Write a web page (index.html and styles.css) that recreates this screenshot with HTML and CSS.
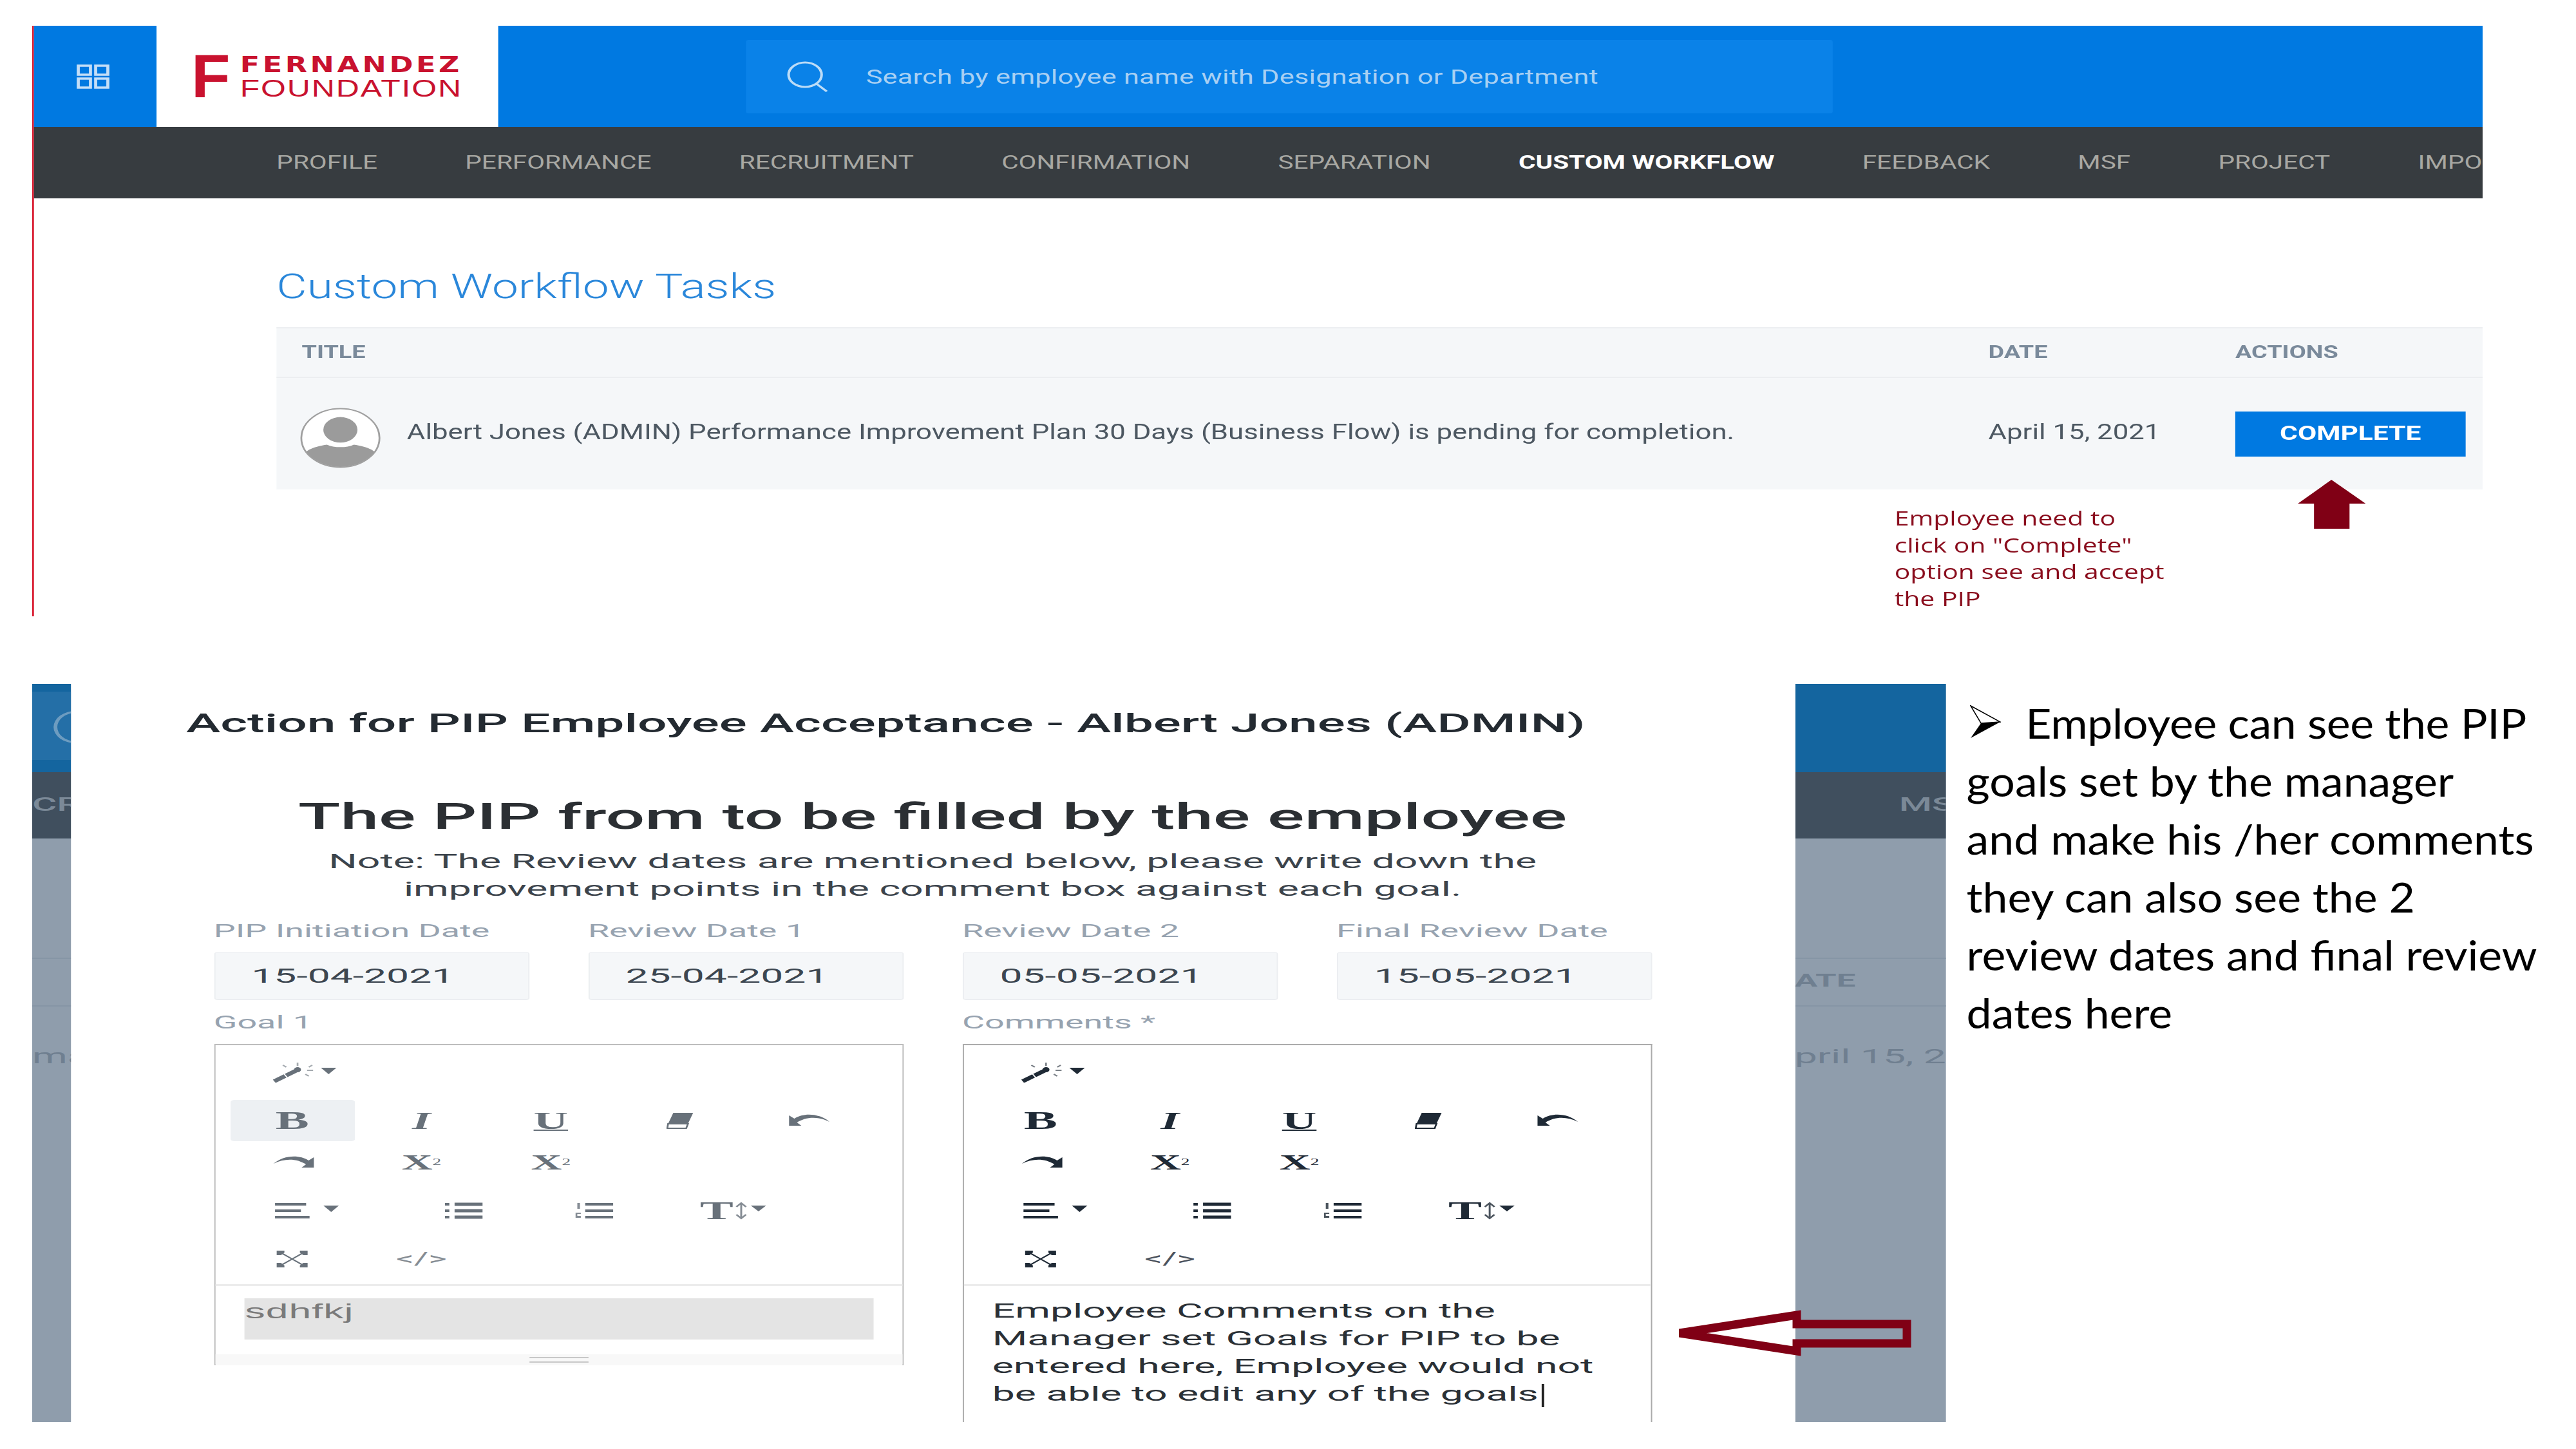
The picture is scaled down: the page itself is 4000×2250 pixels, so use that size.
FILE: index.html
```html
<!DOCTYPE html>
<html lang="en">
<head>
    <meta charset="UTF-8">
    <title>Custom Workflow Tasks</title>
    <link rel="stylesheet" href="styles.css">
</head>
<body>
    <!-- icon sheet -->
    <svg class="icon-sheet" aria-hidden="true">
        <symbol id="i-wand" viewBox="0 0 80 32" preserveAspectRatio="none">
            <path d="M4 30 L30 13" stroke="currentColor" stroke-width="6" stroke-dasharray="15 1.5" fill="none"/>
            <circle cx="31" cy="12" r="4" fill="currentColor"/>
            <path d="M31 1v5M14 5l4 3M48 5l-4 3M42 13h7M44 22l-4-3" stroke="currentColor" stroke-width="2" opacity=".6" fill="none"/>
            <path d="M58 9h18l-9 10z" fill="currentColor"/>
        </symbol>
        <symbol id="i-eraser" viewBox="0 0 32 28" preserveAspectRatio="none">
            <path d="M8 2h23l-6 17H2z" fill="currentColor"/>
            <path d="M2 19h23l-2 7H1z" fill="none" stroke="currentColor" stroke-width="2"/>
        </symbol>
        <symbol id="i-undo" viewBox="0 0 50 22" preserveAspectRatio="none">
            <path d="M1 3v16h14L10 14C20 5 34 4 47 13 36 0 18-2 7 8z" fill="currentColor"/>
        </symbol>
        <symbol id="i-redo" viewBox="0 0 50 22" preserveAspectRatio="none">
            <path d="M49 3v16H35l5-5C30 5 16 4 3 13 14 0 32-2 43 8z" fill="currentColor"/>
        </symbol>
        <symbol id="i-align" viewBox="0 0 80 26" preserveAspectRatio="none">
            <path d="M2 3h36M2 13h30M2 23h40" stroke="currentColor" stroke-width="4" fill="none"/>
            <path d="M58 5h18l-9 10z" fill="currentColor"/>
        </symbol>
        <symbol id="i-ul" viewBox="0 0 46 26" preserveAspectRatio="none">
            <path d="M12 3h32M12 13h32M12 23h32" stroke="currentColor" stroke-width="5" fill="none"/>
            <path d="M1 1h5v4H1zM1 11h5v4H1zM1 21h5v4H1z" fill="currentColor"/>
        </symbol>
        <symbol id="i-ol" viewBox="0 0 46 26" preserveAspectRatio="none">
            <path d="M12 3h32M12 13h32M12 23h32" stroke="currentColor" stroke-width="4" fill="none"/>
            <path d="M3 1h3v9H3zM1 16h6v2H3v3h4v3H1z" fill="currentColor" opacity=".8"/>
        </symbol>
        <symbol id="i-size" viewBox="0 0 34 28" preserveAspectRatio="none">
            <path d="M6 2v24M1 8l5-6 5 6M1 20l5 6 5-6" stroke="currentColor" stroke-width="2" fill="none" opacity=".8"/>
            <path d="M16 6h16l-8 9z" fill="currentColor"/>
        </symbol>
        <symbol id="i-full" viewBox="0 0 38 28" preserveAspectRatio="none">
            <path d="M7 5l24 18M31 5L7 23" stroke="currentColor" stroke-width="2" fill="none"/>
            <path d="M1 1h9v3l-4 4H1zM37 1h-9v3l4 4h5zM1 27h9v-3l-4-4H1zM37 27h-9v-3l4-4h5z" fill="currentColor"/>
        </symbol>
    </svg>

    <section class="shot-top">
        <div class="stretch">
            <header class="topbar">
                <div class="apps-tile">
                    <svg class="apps-icon" viewBox="0 0 38 38">
                        <path d="M2 2h14v14H2zM22 2h14v14H22zM2 22h14v14H2zM22 22h14v14H22z"/>
                    </svg>
                </div>
                <div class="logo">
                    <span class="logo-mark">F</span>
                    <span class="logo-words">
                        <span class="logo-top">FERNANDEZ</span>
                        <span class="logo-bottom">FOUNDATION</span>
                    </span>
                </div>
                <div class="search">
                    <svg class="search-icon" viewBox="0 0 49 48">
                        <circle cx="22" cy="21" r="19"/>
                        <path d="M35 35l12 12"/>
                    </svg>
                    <span class="search-text">Search by employee name with Designation or Department</span>
                </div>
            </header>
            <nav class="menu">
                <span>PROFILE</span>
                <span>PERFORMANCE</span>
                <span>RECRUITMENT</span>
                <span>CONFIRMATION</span>
                <span>SEPARATION</span>
                <span class="active">CUSTOM WORKFLOW</span>
                <span>FEEDBACK</span>
                <span>MSF</span>
                <span>PROJECT</span>
                <span>IMPO</span>
            </nav>
            <main class="tasks">
                <h1>Custom Workflow Tasks</h1>
                <div class="task-table">
                    <div class="task-head">
                        <span>TITLE</span>
                        <span>DATE</span>
                        <span>ACTIONS</span>
                    </div>
                    <div class="task-row">
                        <span class="task-title">
                            <svg class="avatar" viewBox="0 0 90 90" preserveAspectRatio="none">
                                <defs><clipPath id="avatar-clip"><circle cx="45" cy="45" r="43"/></clipPath></defs>
                                <circle cx="45" cy="45" r="43.5" fill="#fff" stroke="#a0a0a0" stroke-width="2"/>
                                <circle cx="45" cy="33" r="19" fill="#9b9b9b"/>
                                <path d="M4 90V70c4-10 20-14 26-15 8 5 22 5 30 0 6 1 22 5 26 15v20z" fill="#9b9b9b" clip-path="url(#avatar-clip)"/>
                            </svg>
                            Albert Jones (ADMIN) Performance Improvement Plan 30 Days (Business Flow) is pending for completion.
                        </span>
                        <span class="task-date">April 15, 2021</span>
                        <span class="complete-btn">COMPLETE</span>
                    </div>
                </div>
            </main>
            <svg class="up-arrow" viewBox="0 0 105 76" preserveAspectRatio="none">
                <path d="M52 0L105 37H80V76H25V37H0z"/>
            </svg>
            <p class="hint">Employee need to<br>click on "Complete"<br>option see and accept<br>the PIP</p>
        </div>
    </section>

    <section class="shot-bottom">
        <div class="stage">
            <div class="stage-row">
                <div class="strip strip-left">
                    <div class="strip-blue"><div class="strip-search"><i class="strip-ring"></i></div></div>
                    <div class="strip-dark"><span>CR</span></div>
                    <div class="strip-gray"></div>
                    <div class="strip-line"></div>
                    <div class="strip-line strip-cell"><span>ma</span></div>
                </div>
                <div class="modal">
                    <h2 class="modal-title">Action for PIP Employee Acceptance - Albert Jones (ADMIN)</h2>
                    <div class="modal-form">
                        <h3 class="form-heading">The PIP from to be filled by the employee</h3>
                        <p class="form-note">Note: The Review dates are mentioned below, please write down the<br>improvement points in the comment box against each goal.</p>
                        <div class="date-fields">
                            <div><label>PIP Initiation Date</label><div class="date-box">15-04-2021</div></div>
                            <div><label>Review Date 1</label><div class="date-box">25-04-2021</div></div>
                            <div><label>Review Date 2</label><div class="date-box">05-05-2021</div></div>
                            <div><label>Final Review Date</label><div class="date-box">15-05-2021</div></div>
                        </div>
                        <div class="goal-fields">
                            <div>
                                <label>Goal 1</label>
                                <div class="editor editor-off">
                                    <div class="toolbar">
                                        <div class="tool-row"><span class="tool"><svg class="ic-wand"><use href="#i-wand"/></svg></span></div>
                                        <div class="tool-row">
                                            <span class="tool tool-on glyph-b">B</span><span class="tool glyph-i">I</span><span class="tool glyph-u">U</span>
                                            <span class="tool"><svg class="ic-eraser"><use href="#i-eraser"/></svg></span>
                                            <span class="tool"><svg class="ic-arc"><use href="#i-undo"/></svg></span>
                                        </div>
                                        <div class="tool-row tool-row-tight">
                                            <span class="tool"><svg class="ic-arc"><use href="#i-redo"/></svg></span>
                                            <span class="tool glyph-x">X<sup>2</sup></span><span class="tool glyph-x">X<sub>2</sub></span>
                                        </div>
                                        <div class="tool-row tool-row-para">
                                            <span class="tool"><svg class="ic-align"><use href="#i-align"/></svg></span>
                                            <span class="tool"><svg class="ic-list"><use href="#i-ul"/></svg></span>
                                            <span class="tool"><svg class="ic-list"><use href="#i-ol"/></svg></span>
                                            <span class="tool glyph-t">T<svg class="ic-size"><use href="#i-size"/></svg></span>
                                        </div>
                                        <div class="tool-row">
                                            <span class="tool"><svg class="ic-full"><use href="#i-full"/></svg></span>
                                            <span class="tool glyph-code">&lt;/&gt;</span>
                                        </div>
                                    </div>
                                    <div class="editor-body-off"><div class="off-text">sdhfkj</div></div>
                                    <div class="grip"><i></i></div>
                                </div>
                            </div>
                            <div>
                                <label>Comments *</label>
                                <div class="editor editor-on">
                                    <div class="toolbar">
                                        <div class="tool-row"><span class="tool"><svg class="ic-wand"><use href="#i-wand"/></svg></span></div>
                                        <div class="tool-row">
                                            <span class="tool glyph-b">B</span><span class="tool glyph-i">I</span><span class="tool glyph-u">U</span>
                                            <span class="tool"><svg class="ic-eraser"><use href="#i-eraser"/></svg></span>
                                            <span class="tool"><svg class="ic-arc"><use href="#i-undo"/></svg></span>
                                        </div>
                                        <div class="tool-row tool-row-tight">
                                            <span class="tool"><svg class="ic-arc"><use href="#i-redo"/></svg></span>
                                            <span class="tool glyph-x">X<sup>2</sup></span><span class="tool glyph-x">X<sub>2</sub></span>
                                        </div>
                                        <div class="tool-row tool-row-para">
                                            <span class="tool"><svg class="ic-align"><use href="#i-align"/></svg></span>
                                            <span class="tool"><svg class="ic-list"><use href="#i-ul"/></svg></span>
                                            <span class="tool"><svg class="ic-list"><use href="#i-ol"/></svg></span>
                                            <span class="tool glyph-t">T<svg class="ic-size"><use href="#i-size"/></svg></span>
                                        </div>
                                        <div class="tool-row">
                                            <span class="tool"><svg class="ic-full"><use href="#i-full"/></svg></span>
                                            <span class="tool glyph-code">&lt;/&gt;</span>
                                        </div>
                                    </div>
                                    <div class="editor-body">Employee Comments on the<br>Manager set Goals for PIP to be<br>entered here, Employee would not<br>be able to edit any of the goals<i class="caret"></i></div>
                                </div>
                            </div>
                        </div>
                    </div>
                </div>
                <div class="strip strip-right">
                    <div class="strip-blue"></div>
                    <div class="strip-dark"><span>MS</span></div>
                    <div class="strip-gray"></div>
                    <div class="strip-line strip-th"><span>ATE</span></div>
                    <div class="strip-line strip-cell"><span>pril 15, 2</span></div>
                </div>
            </div>
            <svg class="left-arrow" viewBox="0 0 375 82" preserveAspectRatio="none">
                <path d="M8 40L190 12V26H361V56H190V68z"/>
            </svg>
        </div>
        <div class="side-text">
            <svg class="bullet" viewBox="0 0 48 52" preserveAspectRatio="none">
                <path d="M1 1L47 26 17 28z" fill="#fff" stroke="#000" stroke-width="1.5"/>
                <path d="M1 51L47 26 17 28z"/>
            </svg><span class="side-first">Employee can see the PIP</span><br>
            goals set by the manager<br>
            and make his /her comments<br>
            they can also see the 2<br>
            review dates and final review<br>
            dates here
        </div>
    </section>
</body>
</html>
```

FILE: styles.css
```css
* {
    box-sizing: border-box;
}
html, body {
    margin: 0;
    background: #fff;
}
body {
    width: 4000px;
    height: 2250px;
    padding: 40px 0 0 50px;
    overflow: hidden;
    font-family: Roboto, "Liberation Sans", sans-serif;
    color: #333a41;
}
.icon-sheet {
    display: none;
}

/* the screenshots in the slide are pulled wider than they were taken */
.stretch {
    transform: scaleX(1.35);
    transform-origin: left top;
}

/* top screenshot */
.shot-top {
    width: 3805px;
    height: 917px;
    overflow: hidden;
}
.shot-top .stretch {
    position: relative;
    width: 2819px;
    height: 917px;
    border-left: 2px solid #d8182d;
}
.topbar {
    display: flex;
    height: 157px;
    background: #0079e1;
}
.apps-tile {
    display: flex;
    align-items: center;
    justify-content: center;
    width: 141px;
    padding-right: 5px;
}
.apps-icon {
    width: 38px;
    height: 38px;
    fill: none;
    stroke: #c4def7;
    stroke-width: 3.5;
}
.logo {
    display: flex;
    align-items: center;
    width: 393px;
    padding-left: 40px;
    background: #fff;
    color: #c9122f;
}
.logo-mark {
    width: 56px;
    font: bold 94px/1 "Liberation Sans", sans-serif;
    transform: scaleX(.78);
    transform-origin: left center;
}
.logo-words {
    display: flex;
    flex-direction: column;
}
.logo-top {
    font: bold 33px/38px "DejaVu Sans", sans-serif;
    letter-spacing: 3.4px;
}
.logo-bottom {
    font: 37px/36px "Liberation Sans", sans-serif;
    letter-spacing: 1.4px;
}
.search {
    display: flex;
    align-items: center;
    width: 1250px;
    height: 114px;
    margin: 22px 0 0 285px;
    padding-left: 46px;
    background: #0a82e8;
    border-radius: 3px;
}
.search-icon {
    width: 49px;
    height: 48px;
    fill: none;
    stroke: #bcdcf7;
    stroke-width: 3;
}
.search-text {
    margin-left: 43px;
    color: #a9d0f3;
    font-size: 32px;
    letter-spacing: .2px;
}
.menu {
    display: flex;
    align-items: center;
    gap: 101px;
    height: 111px;
    padding: 0 0 3px 279px;
    overflow: hidden;
    background: #373c40;
    color: #a8a8a3;
    font-size: 30px;
    white-space: nowrap;
}
.menu .active {
    color: #fff;
    font-weight: 700;
}
.tasks {
    padding: 102px 0 0 279px;
}
.tasks h1 {
    margin: 0 0 28px;
    color: #2a87da;
    font-size: 54px;
    font-weight: 300;
    line-height: 70px;
}
.task-table {
    background: #f5f7f9;
    border-top: 2px solid #eceef1;
}
.task-head, .task-row {
    display: grid;
    grid-template-columns: 1969px 284px 1fr;
    align-items: center;
}
.task-head {
    height: 77px;
    padding-bottom: 2px;
    border-bottom: 2px solid #eceef1;
    color: #7a8a9b;
    font-size: 28px;
    font-weight: 700;
}
.task-head span:first-child {
    padding-left: 29px;
}
.task-row {
    height: 173px;
    color: #4d5862;
    font-size: 32.4px;
}
.task-title {
    display: flex;
    align-items: center;
    gap: 30px;
    height: 100px;
    padding: 0 0 6px 27px;
    white-space: nowrap;
}
.task-date {
    margin-bottom: 6px;
}
.avatar {
    flex: none;
    width: 93px;
    height: 94px;
    margin-top: 18px;
}
.complete-btn {
    width: 265px;
    height: 70px;
    background: #0079e1;
    color: #fff;
    font-size: 31.5px;
    font-weight: 700;
    line-height: 68px;
    text-align: center;
}
.up-arrow {
    position: absolute;
    top: 705px;
    left: 2604px;
    width: 78px;
    height: 76px;
    fill: #800015;
}
.hint {
    position: absolute;
    top: 744px;
    left: 2140px;
    margin: 0;
    color: #8a0d1d;
    font: 30.3px/41.7px "Open Sans", sans-serif;
    white-space: nowrap;
}

/* bottom screenshot and the slide text next to it, stretched further */
.shot-bottom {
    display: flex;
    height: 1146px;
    margin-top: 105px;
}
.stage {
    position: relative;
    flex: none;
    width: 2972px;
    height: 1146px;
}
.stage-row {
    display: flex;
    width: 1524px;
    height: 1146px;
    overflow: hidden;
    transform: scaleX(1.95);
    transform-origin: left top;
}
.strip {
    display: flex;
    flex: none;
    flex-direction: column;
    overflow: hidden;
    background: #8f9dac;
    color: #6f7f90;
    font-size: 32px;
    white-space: nowrap;
}
.strip-left {
    width: 30.5px;
}
.strip-right {
    width: 120.5px;
}
.strip-blue {
    height: 137px;
    padding-top: 12px;
    background: #14659f;
}
.strip-search {
    height: 106px;
    padding: 30px 0 0 17px;
    background: #246fa7;
    overflow: hidden;
}
.strip-ring {
    display: block;
    width: 35px;
    height: 50px;
    border: 3px solid #6d9cc0;
    border-radius: 50%;
}
.strip-dark {
    height: 103px;
    padding-top: 32px;
    background: #404f5e;
    color: #7b8997;
    font-size: 30px;
    font-weight: 500;
}
.strip-right .strip-dark {
    padding-left: 83px;
}
.strip-gray {
    height: 185px;
}
.strip-line {
    height: 74px;
    border-top: 2px solid #8695a5;
}
.strip-th {
    padding-top: 18px;
    font-size: 27px;
    font-weight: 700;
}
.strip-cell {
    flex: 1;
    padding-top: 58px;
}

.modal {
    flex: none;
    width: 1373px;
    height: 1146px;
    overflow: hidden;
    background: #fff;
}
.modal-title {
    margin: 41px 0 0 92px;
    color: #232a31;
    font-size: 41.2px;
    font-weight: 500;
    line-height: 40px;
    white-space: nowrap;
}
.modal-form {
    width: 1145px;
    margin-left: 114px;
}
.form-heading {
    margin: 95px 0 0;
    color: #2b2f33;
    font-size: 55px;
    font-weight: 500;
    line-height: 60px;
    text-align: center;
    white-space: nowrap;
}
.form-note {
    margin: 18px 0 0;
    color: #3c444c;
    font-size: 32px;
    line-height: 43px;
    text-align: center;
    white-space: nowrap;
}
.date-fields {
    display: grid;
    grid-template-columns: repeat(4, 251px);
    gap: 47px;
    margin-top: 27px;
}
label {
    display: block;
    height: 34px;
    color: #97a3b0;
    font-size: 27.6px;
    line-height: 34px;
    white-space: nowrap;
}
.date-box {
    height: 75px;
    margin-top: 15px;
    padding-left: 29px;
    background: #f5f7f9;
    border: 1px solid #eceef1;
    border-bottom-width: 2px;
    border-radius: 3px;
    color: #3c4650;
    font-size: 32px;
    line-height: 73px;
}
.goal-fields {
    display: grid;
    grid-template-columns: repeat(2, 549px);
    gap: 47px;
    margin-top: 18px;
}
.editor {
    margin-top: 16px;
    border: 2px solid #bdbdbd;
    border-left-width: 1.5px;
    border-right-width: 1.5px;
}
.editor-off {
    height: 499px;
    color: #68717a;
}
.editor-on {
    height: 620px;
    border-color: #ababab;
    border-bottom: 0;
    color: #1f2a36;
}
.toolbar {
    display: flex;
    flex-direction: column;
    gap: 11px;
    height: 374px;
    padding: 10px 0 0 12px;
    border-bottom: 3px solid #ececec;
}
.tool-row {
    display: grid;
    grid-template-columns: repeat(5, 99px);
    gap: 4px;
    height: 64px;
}
.tool-row-tight {
    margin-top: -10px;
}
.tool-row-para {
    grid-template-columns: 123px 127px 80px 143px;
    gap: 0;
}
.tool {
    display: flex;
    align-items: center;
    justify-content: center;
    border-radius: 3px;
    font-family: "Liberation Serif", serif;
    font-size: 40px;
    line-height: 1;
}
.tool-on {
    background: #edf0f3;
}
.glyph-b, .glyph-i, .glyph-u, .glyph-x, .glyph-t {
    font-weight: 700;
}
.glyph-i {
    font-style: italic;
    font-size: 38px;
}
.glyph-u {
    font-size: 38px;
    text-decoration: underline;
    text-decoration-thickness: 2px;
}
.glyph-x {
    font-size: 34px;
}
.glyph-x sup, .glyph-x sub {
    font-size: 14px;
    font-weight: 400;
}
.glyph-code {
    font-family: Roboto, sans-serif;
    font-size: 28px;
    opacity: .8;
}
.ic-wand {
    width: 55px;
    height: 32px;
    margin-left: 20px;
}
.ic-eraser {
    width: 22px;
    height: 28px;
}
.ic-arc {
    width: 35px;
    height: 22px;
}
.ic-align {
    width: 55px;
    height: 26px;
}
.ic-list {
    width: 32px;
    height: 26px;
}
.ic-size {
    width: 26px;
    height: 28px;
    margin-left: 2px;
}
.ic-full {
    width: 26px;
    height: 28px;
}
.editor-body-off {
    height: 106px;
    padding: 19px 23px 0;
}
.off-text {
    height: 64px;
    padding-left: 1px;
    background: #e4e4e4;
    color: #7a7a7a;
    font: 32px/40px "Liberation Sans", sans-serif;
    letter-spacing: .5px;
}
.grip {
    display: flex;
    justify-content: center;
    height: 17px;
    padding-top: 4px;
    background: #f8f8f8;
}
.grip i {
    width: 47px;
    height: 9px;
    border-top: 2px solid #c8c8c8;
    border-bottom: 2px solid #c8c8c8;
}
.editor-body {
    padding: 17px 0 0 23px;
    color: #2a3036;
    font-family: Roboto, sans-serif;
    font-size: 32px;
    line-height: 43px;
    white-space: nowrap;
}
.caret {
    display: inline-block;
    width: 1.5px;
    height: 36px;
    margin-left: 3px;
    background: #222;
    vertical-align: middle;
}
.left-arrow {
    position: absolute;
    top: 968px;
    left: 2550px;
    width: 375px;
    height: 82px;
    fill: none;
    stroke: #800015;
    stroke-width: 13;
}
.side-text {
    padding: 16px 0 0 29px;
    color: #000;
    font: 64px/90px Lato, sans-serif;
    white-space: nowrap;
    transform: scaleX(1.09);
    transform-origin: left top;
}
.bullet {
    width: 44px;
    height: 52px;
    margin: 0 35px 0 5px;
}
.side-first {
    letter-spacing: -.3px;
}
```
